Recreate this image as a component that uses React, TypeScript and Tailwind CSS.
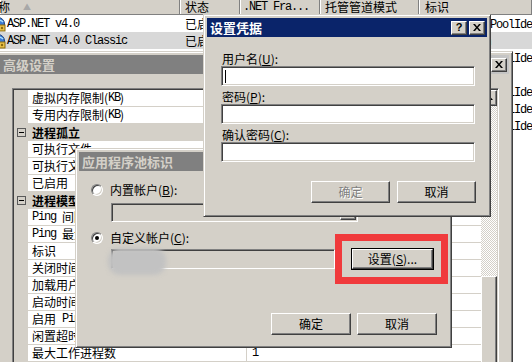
import React from "react";

const FRAME =
  "bg-[#d4d0c8] border border-t-[#d4d0c8] border-l-[#d4d0c8] border-r-[#404040] border-b-[#404040] shadow-[inset_1px_1px_0_#fff,inset_-1px_-1px_0_#808080] p-[3px]";
const RAISED =
  "bg-[#d4d0c8] border border-t-white border-l-white border-r-[#404040] border-b-[#404040] shadow-[inset_-1px_-1px_0_#808080]";
const SUNKEN =
  "border border-t-[#808080] border-l-[#808080] border-r-white border-b-white shadow-[inset_1px_1px_0_#404040,inset_-1px_-1px_0_#d4d0c8] p-px";

function M({ children }: { children: React.ReactNode }) {
  return (
    <span className="font-['Liberation_Mono',monospace] tracking-[-1.2px] whitespace-pre">
      {children}
    </span>
  );
}

function CloseGlyph() {
  return (
    <svg width="8" height="7" viewBox="0 0 8 7">
      <path d="M0 0h2l2 2.5L6 0h2L5 3.5L8 7H6L4 4.5L2 7H0L3 3.5Z" fill="#000" />
    </svg>
  );
}

function CaptionButton({ children }: { children: React.ReactNode }) {
  return (
    <div className={`w-[16px] h-[14px] flex items-center justify-center ${RAISED}`}>
      {children}
    </div>
  );
}

function TitleBar({
  title,
  active,
  buttons,
}: {
  title: string;
  active?: boolean;
  buttons?: React.ReactNode;
}) {
  return (
    <div
      className={`h-[19px] shrink-0 flex items-center pl-[3px] pr-[2px] ${
        active
          ? "bg-[#0a246a]"
          : "bg-[linear-gradient(90deg,#808080_40%,#c6c6c6)]"
      }`}
    >
      <span
        className={`font-bold text-[13px] ${
          active ? "text-white" : "text-[#d4d0c8]"
        }`}
      >
        {title}
      </span>
      <div className="ml-auto flex gap-[2px]">{buttons}</div>
    </div>
  );
}

function Button({
  children,
  disabled,
  isDefault,
  className = "",
}: {
  children: React.ReactNode;
  disabled?: boolean;
  isDefault?: boolean;
  className?: string;
}) {
  const inner = (
    <div
      className={`w-full h-full flex items-center justify-center ${RAISED} ${
        disabled ? "text-[#808080] [text-shadow:1px_1px_0_#fff]" : "text-black"
      }`}
    >
      {children}
    </div>
  );
  if (isDefault)
    return <div className={`border border-black ${className}`}>{inner}</div>;
  return <div className={className}>{inner}</div>;
}

function Radio({ checked }: { checked?: boolean }) {
  return (
    <div className="w-[12px] h-[12px] rounded-full bg-white border border-t-[#808080] border-l-[#808080] border-r-white border-b-white shadow-[inset_1px_1px_0_#404040,inset_-1px_-1px_0_#d4d0c8] flex items-center justify-center">
      {checked && <div className="w-[4px] h-[4px] rounded-full bg-black" />}
    </div>
  );
}

function PoolIcon() {
  return (
    <svg width="16" height="16" viewBox="0 0 16 16" className="shrink-0 -ml-[10px] mr-[1px]">
      <circle cx="8" cy="8" r="6.5" fill="#3a7bd5" stroke="#1c3f7a" />
      <path d="M3 7c2-3 7-4 10-1" stroke="#a8e0ff" strokeWidth="1.5" fill="none" />
      <rect x="9" y="9" width="6" height="6" fill="#e8c14a" stroke="#8a6a10" />
      <circle cx="12" cy="12" r="1.2" fill="#8a6a10" />
    </svg>
  );
}

const listRows = [
  { name: "ASP.NET v4.0", status: "已启动", ver: "v4.0", mode: "集成", id: "ApplicationPoolIdentity" },
  { name: "ASP.NET v4.0 Classic", status: "已启动", ver: "v4.0", mode: "经典", id: "LocalSystem", sel: true },
  { name: "Classic .NET AppPool", status: "已启动", ver: "v2.0", mode: "经典", id: "ApplicationPoolIdentity" },
  { name: "DefaultAppPool", status: "已启动", ver: "v4.0", mode: "集成", id: "NetworkService" },
  { name: "SitePool01", status: "已启动", ver: "v4.0", mode: "集成", id: "ApplicationPoolIdentity" },
  { name: "SitePool02", status: "已启动", ver: "v4.0", mode: "集成", id: "ApplicationPoolIdentity" },
  { name: "SitePool03", status: "已启动", ver: "v4.0", mode: "集成", id: "ApplicationPoolIdentity" },
];

function HeaderCell({
  className = "",
  children,
}: {
  className?: string;
  children?: React.ReactNode;
}) {
  return (
    <div
      className={`h-full flex items-center overflow-hidden whitespace-nowrap border-r border-r-[#808080] shadow-[inset_1px_0_0_#fff] ${className}`}
    >
      {children}
    </div>
  );
}

function ListView() {
  return (
    <div className="flex flex-col w-full">
      <div className="flex h-[15px] bg-[#d4d0c8] border-b border-b-[#808080]">
        <HeaderCell className="w-[180px]">
          <span className="-ml-[14px]">名称</span>
          <span className="ml-[13px] text-[8px] text-[#a8a8a8]">▲</span>
        </HeaderCell>
        <HeaderCell className="w-[60px] pl-[5px]">状态</HeaderCell>
        <HeaderCell className="w-[80px] pl-[3px]">
          <M>.NET Fra...</M>
        </HeaderCell>
        <HeaderCell className="w-[99px] pl-[5px]">托管管道模式</HeaderCell>
        <HeaderCell className="flex-1 pl-[6px]">标识</HeaderCell>
      </div>
      {listRows.map((r) => (
        <div
          key={r.name}
          className={`flex h-[17px] items-center whitespace-nowrap ${
            r.sel ? "bg-[#d8d8d8]" : "bg-white"
          }`}
        >
          <div className="w-[180px] flex items-center overflow-hidden">
            <PoolIcon />
            <M>{r.name}</M>
          </div>
          <div className="w-[60px] pl-[5px] overflow-hidden">{r.status}</div>
          <div className="w-[80px] pl-[3px] overflow-hidden">
            <M>{r.ver}</M>
          </div>
          <div className="w-[99px] pl-[4px] overflow-hidden">{r.mode}</div>
          <div className="flex-1 pl-[5px] overflow-hidden">
            <M>{r.id}</M>
          </div>
        </div>
      ))}
    </div>
  );
}

type PRow = { name: React.ReactNode; value?: React.ReactNode; cat?: boolean };

const propRows: PRow[] = [
  { name: <>虚拟内存限制(<M>KB</M>)</>, value: "0" },
  { name: <>专用内存限制(<M>KB</M>)</>, value: "0" },
  { name: "进程孤立", cat: true },
  { name: "可执行文件", value: "" },
  { name: "可执行文件参数", value: "" },
  { name: "已启用", value: "False" },
  { name: "进程模型", cat: true },
  { name: <><M>Ping </M>间隔(秒)</>, value: "30" },
  { name: <><M>Ping </M>最大响应时间(秒)</>, value: "90" },
  { name: "标识", value: <M>LocalSystem</M> },
  { name: "关闭时间限制(秒)", value: "90" },
  { name: "加载用户配置文件", value: "False" },
  { name: "启动时间限制(秒)", value: "90" },
  { name: <>启用<M> Ping</M></>, value: "True" },
  { name: "闲置超时(分钟)", value: "20" },
  { name: "最大工作进程数", value: <M>1</M> },
  { name: "", cat: true },
  { name: "", value: "" },
];

function PropRow({ row }: { row: PRow }) {
  if (row.cat)
    return (
      <div className="flex h-[17px] items-center bg-[#d4d0c8] whitespace-nowrap">
        <div className="w-[14px] flex justify-center">
          {row.name !== "" && (
            <div className="w-[9px] h-[9px] border border-[#5a5a5a] flex items-center justify-center">
              <div className="w-[5px] h-px bg-black" />
            </div>
          )}
        </div>
        <span className="pl-[4px] font-bold">{row.name}</span>
      </div>
    );
  return (
    <div className="flex h-[17px] whitespace-nowrap">
      <div className="w-[14px] bg-[#d4d0c8]" />
      <div className="w-[218px] flex items-center pl-[4px] border-b border-b-[#d4d0c8] bg-white overflow-hidden">
        {row.name}
      </div>
      <div className="w-px bg-[#d4d0c8]" />
      <div className="flex-1 flex items-center pl-[5px] border-b border-b-[#d4d0c8] bg-white overflow-hidden">
        {row.value}
      </div>
    </div>
  );
}

function Scrollbar() {
  return (
    <div className="w-[16px] flex flex-col">
      <div className={`h-[16px] flex items-center justify-center ${RAISED}`}>
        <svg width="7" height="4" viewBox="0 0 7 4">
          <path d="M3.5 0L7 4H0Z" fill="#000" />
        </svg>
      </div>
      <div className="h-[170px] bg-[image:repeating-conic-gradient(#d4d0c8_0_25%,#ffffff_0_50%)] bg-[length:2px_2px]" />
      <div className={`h-[94px] ${RAISED}`} />
      <div className="flex-1 bg-[image:repeating-conic-gradient(#d4d0c8_0_25%,#ffffff_0_50%)] bg-[length:2px_2px]" />
      <div className={`h-[16px] ${RAISED}`} />
    </div>
  );
}

function AdvancedWindow() {
  return (
    <div className={`absolute left-[-4px] top-[51px] w-[517px] h-[340px] flex flex-col ${FRAME}`}>
      <TitleBar
        title="高级设置"
        buttons={
          <CaptionButton>
            <CloseGlyph />
          </CaptionButton>
        }
      />
      <div className="pt-[14px] pl-[12px] pr-[10px]">
        <div className={`flex bg-white ${SUNKEN}`}>
          <div className="flex-1 flex flex-col">
            {propRows.map((r, i) => (
              <PropRow key={i} row={r} />
            ))}
          </div>
          <Scrollbar />
        </div>
      </div>
    </div>
  );
}

function IdentityDialog() {
  return (
    <div className={`absolute left-[75px] top-[148px] w-[377px] h-[200px] flex flex-col ${FRAME}`}>
      <TitleBar
        title="应用程序池标识"
        buttons={
          <CaptionButton>
            <CloseGlyph />
          </CaptionButton>
        }
      />
      <div className="flex flex-col pl-[12px] pt-[13px]">
        <div className="flex items-center gap-[7px] h-[12px]">
          <Radio />
          <span>
            内置帐户(<span className="underline">B</span>):
          </span>
        </div>
        <div className={`ml-[20px] mt-[7px] w-[247px] h-[19px] flex justify-end bg-[#d4d0c8] ${SUNKEN}`}>
          <div className={`w-[16px] h-full flex items-center justify-center ${RAISED}`}>
            <svg width="7" height="4" viewBox="0 0 7 4">
              <path d="M0 0H7L3.5 4Z" fill="#808080" />
            </svg>
          </div>
        </div>
        <div className="flex items-center gap-[7px] h-[12px] mt-[10px]">
          <Radio checked />
          <span>
            自定义帐户(<span className="underline">C</span>):
          </span>
        </div>
        <div className="flex items-center ml-[20px] mt-[4px] gap-[16px] h-[22px]">
          <div className={`relative w-[224px] h-[20px] bg-[#d4d0c8] ${SUNKEN}`}>
            <div className="absolute -left-[4px] -top-[2px] w-[58px] h-[27px] rounded-[12px] bg-[#c2c2c2] blur-[2px]" />
          </div>
          <div className="relative">
            <Button isDefault className="w-[83px] h-[22px]">
              设置(<span className="underline">S</span>)...
            </Button>
            <div className="absolute -left-[16px] -top-[14px] -right-[14px] -bottom-[14px] border-[7px] border-[#f03a3c]" />
          </div>
        </div>
        <div className="flex justify-end gap-[6px] pr-[11px] mt-[43px]">
          <Button className="w-[80px] h-[22px]">确定</Button>
          <Button className="w-[80px] h-[22px]">取消</Button>
        </div>
      </div>
    </div>
  );
}

function Field({ focused }: { focused?: boolean }) {
  return (
    <div className={`w-[254px] h-[20px] bg-white ${SUNKEN}`}>
      {focused && <div className="ml-[2px] mt-[2px] w-px h-[13px] bg-black" />}
    </div>
  );
}

function Label({ children, first }: { children: React.ReactNode; first?: boolean }) {
  return (
    <div className={`h-[15px] flex items-center pl-px ${first ? "" : "mt-[3px]"}`}>
      {children}
    </div>
  );
}

function CredentialDialog() {
  return (
    <div className={`absolute left-[203px] top-[14px] w-[288px] h-[203px] flex flex-col ${FRAME}`}>
      <TitleBar
        active
        title="设置凭据"
        buttons={
          <>
            <CaptionButton>
              <span className="font-['Liberation_Sans',sans-serif] font-bold text-[11px] leading-none">?</span>
            </CaptionButton>
            <CaptionButton>
              <CloseGlyph />
            </CaptionButton>
          </>
        }
      />
      <div className="flex flex-col pl-[14px] pr-[11px] pt-[14px]">
        <Label first>
          用户名(<span className="underline">U</span>):
        </Label>
        <Field focused />
        <Label>
          密码(<span className="underline">P</span>):
        </Label>
        <Field />
        <Label>
          确认密码(<span className="underline">C</span>):
        </Label>
        <Field />
        <div className="flex justify-end gap-[7px] mt-[19px]">
          <Button disabled className="w-[79px] h-[22px]">确定</Button>
          <Button className="w-[79px] h-[22px]">取消</Button>
        </div>
      </div>
    </div>
  );
}

export default function App() {
  return (
    <div className="relative w-[532px] h-[362px] overflow-hidden bg-white text-[12px] leading-none text-black font-['Noto_Sans_CJK_SC','Noto_Sans',sans-serif]">
      <ListView />
      <AdvancedWindow />
      <IdentityDialog />
      <CredentialDialog />
    </div>
  );
}
